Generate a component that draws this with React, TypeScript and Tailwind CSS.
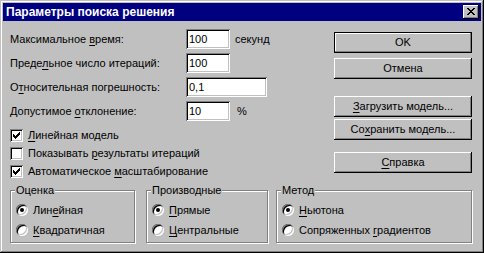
import type { ReactNode } from "react";

const raised =
    "shadow-[inset_-1px_-1px_#000,inset_1px_1px_#fff,inset_-2px_-2px_#808080,inset_2px_2px_#c0c0c0]";
const sunken =
    "shadow-[inset_1px_1px_#808080,inset_-1px_-1px_#fff,inset_2px_2px_#000,inset_-2px_-2px_#c0c0c0]";

function U({ children }: { children: ReactNode }) {
    return <span className="underline decoration-1 underline-offset-[2px]">{children}</span>;
}

function Field({ value, width }: { value: string; width: string }) {
    return (
        <div className={`h-[20px] ${width} bg-white ${sunken} flex items-center pl-[3px] leading-none`}>
            {value}
        </div>
    );
}

function Check({ checked, children }: { checked: boolean; children: ReactNode }) {
    return (
        <div className="h-[18px] flex items-center">
            <span className={`relative w-[13px] h-[13px] bg-white ${sunken} shrink-0`}>
                {checked && (
                    <svg className="absolute left-[3px] top-[3px]" width="7" height="7" viewBox="0 0 7 7" shapeRendering="crispEdges">
                        <path d="M0 2h1v3H0z M1 3h1v3H1z M2 4h1v3H2z M3 3h1v3H3z M4 2h1v3H4z M5 1h1v3H5z M6 0h1v3H6z" fill="#000" />
                    </svg>
                )}
            </span>
            <span className="ml-[5px]">{children}</span>
        </div>
    );
}

function Radio({ checked, children }: { checked: boolean; children: ReactNode }) {
    return (
        <div className="h-[20px] flex items-center">
            <span className="relative w-[12px] h-[12px] rounded-full bg-white shadow-[inset_1px_1px_#808080,inset_-1px_-1px_#fff,inset_2px_2px_#000,inset_-2px_-2px_#c0c0c0] shrink-0">
                {checked && <span className="absolute left-[4px] top-[4px] w-[4px] h-[4px] rounded-full bg-black" />}
            </span>
            <span className="ml-[5px]">{children}</span>
        </div>
    );
}

function Group({ title, width, children }: { title: string; width: string; children: ReactNode }) {
    return (
        <div className={`relative ${width} h-[53px] border border-[#808080] shadow-[inset_1px_1px_#fff,1px_1px_#fff] pt-[9px] pl-[5px]`}>
            <span className="absolute -top-[7px] left-[4px] px-[1px] bg-[#c0c0c0] leading-[13px]">{title}</span>
            {children}
        </div>
    );
}

function Btn({ children, primary = false, className = "" }: { children: ReactNode; primary?: boolean; className?: string }) {
    return (
        <div
            className={`h-[21px] w-[138px] flex items-center justify-center bg-[#c0c0c0] ${
                primary
                    ? "border border-black shadow-[inset_-1px_-1px_#808080,inset_1px_1px_#fff]"
                    : raised
            } ${className}`}
        >
            {children}
        </div>
    );
}

export default function App() {
    return (
        <div className="w-[484px] h-[253px] bg-[#c0c0c0] p-[3px] text-[11px] text-black font-['Liberation_Sans',Arial,sans-serif] shadow-[inset_-1px_-1px_#000,inset_1px_1px_#c0c0c0,inset_-2px_-2px_#808080,inset_2px_2px_#fff] overflow-hidden">
            {/* Title bar */}
            <div className="h-[18px] bg-[#000080] flex items-center justify-between pl-[3px] pr-[2px]">
                <span className="text-white font-bold text-[12px] leading-none">Параметры поиска решения</span>
                <div className={`w-[16px] h-[14px] bg-[#c0c0c0] ${raised} flex items-center justify-center`}>
                    <svg width="8" height="7" viewBox="0 0 8 7" shapeRendering="crispEdges" className="-mt-[1px] -ml-[1px]">
                        <path
                            d="M0 0h2v1H0z M6 0h2v1H6z M1 1h2v1H1z M5 1h2v1H5z M2 2h4v1H2z M3 3h2v1H3z M2 4h4v1H2z M1 5h2v1H1z M5 5h2v1H5z M0 6h2v1H0z M6 6h2v1H6z"
                            fill="#000"
                        />
                    </svg>
                </div>
            </div>

            <div className="flex pt-[8px] pl-[7px]">
                {/* Left column */}
                <div className="w-[324px]">
                    <div className="flex flex-col gap-[4px]">
                        <div className="flex items-center">
                            <span className="w-[176px]">Максимальное <U>в</U>ремя:</span>
                            <Field value="100" width="w-[44px]" />
                            <span className="ml-[5px]">секунд</span>
                        </div>
                        <div className="flex items-center">
                            <span className="w-[176px]">Преде<U>л</U>ьное число итераций:</span>
                            <Field value="100" width="w-[44px]" />
                        </div>
                        <div className="flex items-center">
                            <span className="w-[176px]">О<U>т</U>носительная погрешность:</span>
                            <Field value="0,1" width="w-[81px]" />
                        </div>
                        <div className="flex items-center">
                            <span className="w-[176px]">Допустимое <U>о</U>тклонение:</span>
                            <Field value="10" width="w-[44px]" />
                            <span className="ml-[7px]">%</span>
                        </div>
                    </div>
                    <div className="mt-[5px]">
                        <Check checked>
                            <U>Л</U>инейная модель
                        </Check>
                        <Check checked={false}>
                            Показывать <U>р</U>езультаты итераций
                        </Check>
                        <Check checked>
                            Автоматическое <U>м</U>асштабирование
                        </Check>
                    </div>
                </div>

                {/* Right column */}
                <div className="flex flex-col pt-[3px]">
                    <Btn primary>OK</Btn>
                    <Btn className="mt-[5px]">Отмена</Btn>
                    <Btn className="mt-[17px]">
                        <U>З</U>агрузить модель...
                    </Btn>
                    <Btn className="mt-[2px]">
                        Со<U>х</U>ранить модель...
                    </Btn>
                    <Btn className="mt-[12px]">
                        <U>С</U>правка
                    </Btn>
                </div>
            </div>

            <div className="flex pl-[7px] mt-[10px]">
                <Group title="Оценка" width="w-[125px]">
                    <Radio checked>
                        Лин<U>е</U>йная
                    </Radio>
                    <Radio checked={false}>
                        <U>К</U>вадратичная
                    </Radio>
                </Group>
                <div className="w-[11px]" />
                <Group title="Производные" width="w-[122px]">
                    <Radio checked>
                        <U>П</U>рямые
                    </Radio>
                    <Radio checked={false}>
                        <U>Ц</U>ентральные
                    </Radio>
                </Group>
                <div className="w-[8px]" />
                <Group title="Метод" width="w-[196px]">
                    <Radio checked>
                        <U>Н</U>ьютона
                    </Radio>
                    <Radio checked={false}>
                        Сопряженных <U>г</U>радиентов
                    </Radio>
                </Group>
            </div>
        </div>
    );
}
